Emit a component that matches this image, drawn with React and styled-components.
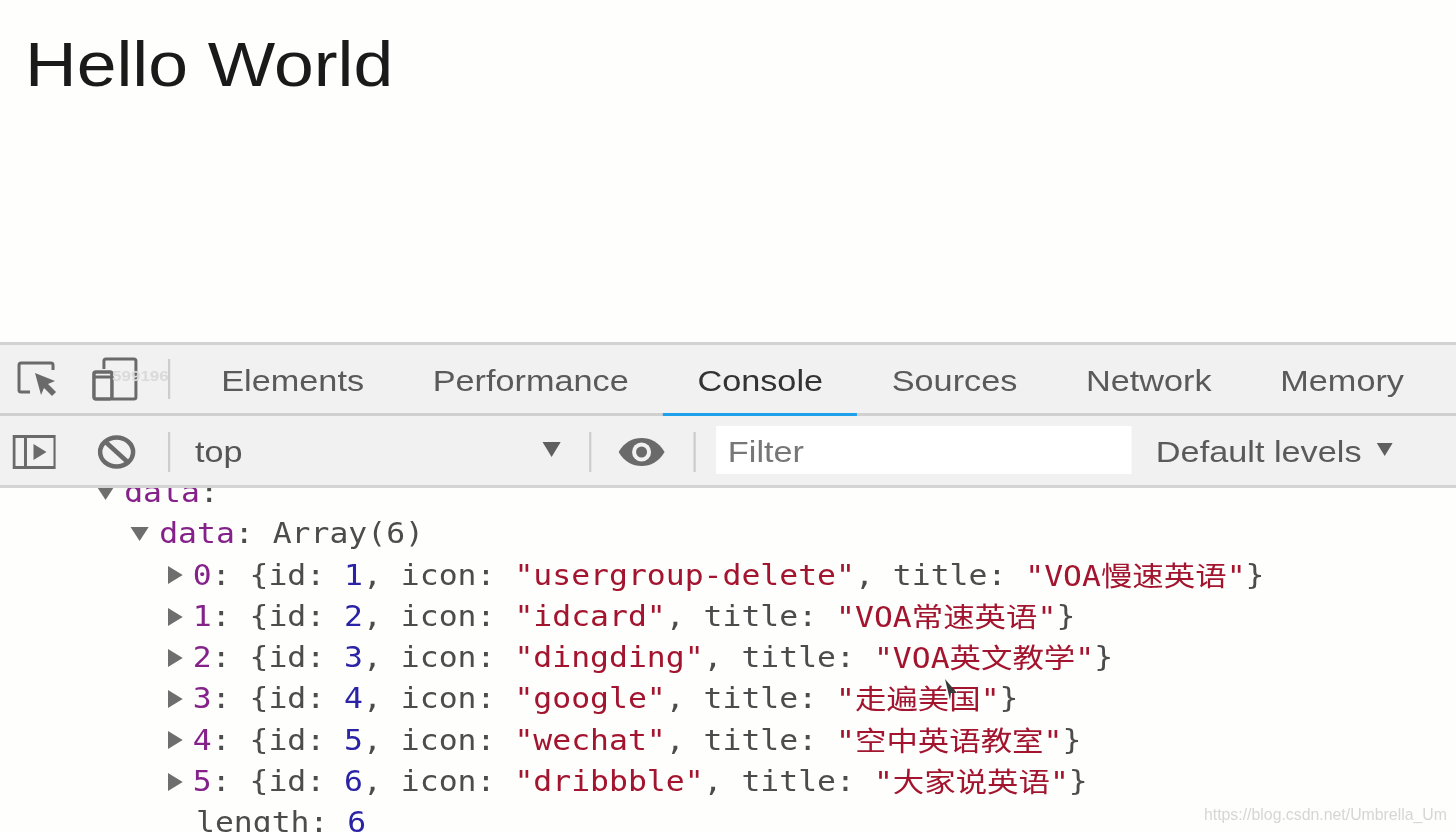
import React from 'react';
import styled, { createGlobalStyle } from 'styled-components';

// the capture is stretched sideways, so the whole devtools page is drawn narrow and scaled up
const STRETCH = 1.135;
const sx = (n) => n / STRETCH;

const GlobalStyle = createGlobalStyle`
  html, body {
    margin: 0;
    padding: 0;
    background: #fff;
  }
`;

const Shell = styled.div`
  position: relative;
  width: 1456px;
  height: 832px;
  overflow: hidden;
  background: #fefefd;
  font-family: "Liberation Sans", Arial, sans-serif;
  filter: blur(0.6px);
`;

const Page = styled.div`
  width: ${sx(1456)}px;
  height: 832px;
  display: flex;
  flex-direction: column;
  transform: scaleX(${STRETCH});
  transform-origin: left top;
`;

const Viewport = styled.div`
  height: 342px;
  flex: none;
  padding: 26px 0 0 ${sx(25)}px;
  box-sizing: border-box;
`;

const Heading = styled.h1`
  margin: 0;
  font-size: 63px;
  line-height: 76px;
  font-weight: 400;
  color: #1a1a1a;
`;

const TabBar = styled.div`
  position: relative;
  flex: none;
  height: 68px;
  display: flex;
  align-items: center;
  background: #f1f1f1;
  border-top: 3px solid #d2d2d2;
  border-bottom: 3px solid #d0d0d0;
`;

const IconSlot = styled.div`
  flex: none;
  width: ${(p) => sx(p.$width)}px;
  margin-left: ${(p) => sx(p.$left || 0)}px;
  display: flex;
  align-items: center;
  justify-content: center;

  svg {
    width: 100%;
  }
`;

const Divider = styled.div`
  flex: none;
  width: ${sx(2)}px;
  height: 40px;
  background: #cdcdcd;
  margin-left: ${(p) => sx(p.$left || 0)}px;
`;

const Tabs = styled.div`
  display: flex;
  height: 100%;
  margin-left: ${sx(17)}px;
`;

const Tab = styled.div`
  position: relative;
  padding: 3px ${sx(34.3)}px 0;
  display: flex;
  align-items: center;
  font-size: 30.2px;
  color: ${(p) => (p.$active ? '#333' : '#5a5a5a')};

  ${(p) =>
    p.$active &&
    `
    &::after {
      content: '';
      position: absolute;
      left: 0;
      right: 0;
      bottom: -3px;
      height: 3px;
      background: #1fa0ea;
    }
  `}
`;

const StrayMark = styled.span`
  position: absolute;
  left: ${sx(112)}px;
  top: 22px;
  font-size: 15px;
  font-weight: 700;
  color: #dadada;
`;

const FilterBar = styled.div`
  flex: none;
  height: 67px;
  padding-top: 2px;
  box-sizing: content-box;
  display: flex;
  align-items: center;
  background: #f1f1f1;
  border-bottom: 3px solid #d4d4d4;
`;

const ContextSelect = styled.div`
  flex: none;
  width: ${sx(394)}px;
  margin-left: ${sx(25)}px;
  padding-right: ${sx(28)}px;
  box-sizing: border-box;
  display: flex;
  align-items: center;
  justify-content: space-between;
  font-size: 30.2px;
  color: #555;
`;

const Caret = styled.span`
  flex: none;
  width: 0;
  height: 0;
  border-left: ${(p) => sx(p.$size)}px solid transparent;
  border-right: ${(p) => sx(p.$size)}px solid transparent;
  border-top: ${(p) => p.$size * 1.5}px solid #5f5f5f;
  margin-top: -4px;
`;

const FilterInput = styled.div`
  flex: none;
  width: ${sx(416)}px;
  height: 48px;
  margin: -3px 0 0 ${sx(20)}px;
  padding: 3px 0 0 ${sx(12)}px;
  box-sizing: border-box;
  display: flex;
  align-items: center;
  background: #fff;
  font-size: 30.2px;
  color: #777;
`;

const Levels = styled.div`
  margin-left: ${sx(24)}px;
  display: flex;
  align-items: center;
  gap: ${sx(15)}px;
  font-size: 30.2px;
  color: #5a5a5a;
`;

const Log = styled.div`
  flex: 1;
  min-height: 0;
  overflow: hidden;
  font-family: "DejaVu Sans Mono", "Liberation Mono", "Noto Sans CJK SC", monospace;
  font-size: 27.7px;
  line-height: 41.3px;
  color: #303030;
`;

const Tree = styled.div`
  margin-top: -16px;
`;

const Row = styled.div`
  display: flex;
  align-items: center;
  height: 41.3px;
  white-space: pre;
  padding-left: ${(p) => sx(p.$indent)}px;
`;

const Arrow = styled.span`
  flex: none;
  width: 0;
  height: 0;
  margin-right: ${sx(10)}px;
  ${(p) =>
    p.$open
      ? `
    border-left: ${sx(10)}px solid transparent;
    border-right: ${sx(10)}px solid transparent;
    border-top: 14px solid #6e6e6e;
  `
      : `
    border-top: 9px solid transparent;
    border-bottom: 9px solid transparent;
    border-left: ${sx(15)}px solid #6e6e6e;
  `}
`;

const Key = styled.span`
  color: #85228a;
`;

const Plain = styled.span`
  color: #4c4c4c;
`;

const Num = styled.span`
  color: #2a23a5;
`;

const Str = styled.span`
  color: #a3152f;
`;

const Cjk = styled.span`
  font-family: "Noto Sans CJK SC", sans-serif;
`;

const Pointer = styled.svg`
  position: absolute;
  left: 943px;
  top: 678px;
`;

const Watermark = styled.span`
  position: absolute;
  right: 9px;
  bottom: 8px;
  font-size: 15.85px;
  color: #d6d6d6;
`;

const items = [
  { id: 1, icon: 'usergroup-delete', latin: 'VOA', cjk: '慢速英语' },
  { id: 2, icon: 'idcard', latin: 'VOA', cjk: '常速英语' },
  { id: 3, icon: 'dingding', latin: 'VOA', cjk: '英文教学' },
  { id: 4, icon: 'google', latin: '', cjk: '走遍美国' },
  { id: 5, icon: 'wechat', latin: '', cjk: '空中英语教室' },
  { id: 6, icon: 'dribbble', latin: '', cjk: '大家说英语' },
];

const tabs = ['Elements', 'Performance', 'Console', 'Sources', 'Network', 'Memory'];

const InspectIcon = () => (
  <svg height="40" viewBox="0 0 40 40" fill="none" preserveAspectRatio="none">
    <path d="M13 33H4a2 2 0 0 1-2-2V6a2 2 0 0 1 2-2h30a2 2 0 0 1 2 2v5" stroke="#6a6a6a" strokeWidth="3" />
    <path d="M18 14l20 8-7 3 8 8-4 4-8-8-3 7z" fill="#6a6a6a" />
  </svg>
);

const DeviceIcon = () => (
  <svg height="44" viewBox="0 0 46 44" fill="none" preserveAspectRatio="none">
    <path d="M12 12V4a2 2 0 0 1 2-2h28a2 2 0 0 1 2 2v36a2 2 0 0 1-2 2H20" stroke="#6a6a6a" strokeWidth="3" />
    <rect x="2" y="15" width="18" height="27" rx="2" stroke="#6a6a6a" strokeWidth="3.5" />
    <path d="M2 20h18" stroke="#6a6a6a" strokeWidth="3" />
  </svg>
);

const SidebarIcon = () => (
  <svg height="34" viewBox="0 0 44 34" fill="none" preserveAspectRatio="none">
    <rect x="1.5" y="1.5" width="41" height="31" stroke="#6a6a6a" strokeWidth="3" />
    <path d="M13 1v32" stroke="#6a6a6a" strokeWidth="3" />
    <path d="M21 9l13 8-13 8z" fill="#6a6a6a" />
  </svg>
);

const BlockIcon = () => (
  <svg height="34" viewBox="0 0 38 34" fill="none" preserveAspectRatio="none">
    <ellipse cx="19" cy="17" rx="16.5" ry="14.5" stroke="#6a6a6a" strokeWidth="4.5" />
    <path d="M8 7l22 20" stroke="#6a6a6a" strokeWidth="4.5" />
  </svg>
);

const EyeIcon = () => (
  <svg height="30" viewBox="0 0 46 30" preserveAspectRatio="none">
    <path d="M0 15C6 5 14 1 23 1s17 4 23 14c-6 10-14 14-23 14S6 25 0 15z" fill="#6a6a6a" />
    <circle cx="23" cy="15" r="9.5" fill="#f1f1f1" />
    <circle cx="23" cy="15" r="5.5" fill="#6a6a6a" />
  </svg>
);

const App = () => (
  <Shell>
    <GlobalStyle />
    <Page>
      <Viewport>
        <Heading>Hello World</Heading>
      </Viewport>

      <TabBar>
        <IconSlot $width={40} $left={17}><InspectIcon /></IconSlot>
        <IconSlot $width={46} $left={35}><DeviceIcon /></IconSlot>
        <StrayMark>599196</StrayMark>
        <Divider $left={30} />
        <Tabs>
          {tabs.map((tab) => (
            <Tab key={tab} $active={tab === 'Console'}>{tab}</Tab>
          ))}
        </Tabs>
      </TabBar>

      <FilterBar>
        <IconSlot $width={44} $left={12}><SidebarIcon /></IconSlot>
        <IconSlot $width={38} $left={42}><BlockIcon /></IconSlot>
        <Divider $left={32} />
        <ContextSelect>
          top
          <Caret $size={10} />
        </ContextSelect>
        <Divider />
        <IconSlot $width={46} $left={28}><EyeIcon /></IconSlot>
        <Divider $left={29} />
        <FilterInput>Filter</FilterInput>
        <Levels>
          Default levels
          <Caret $size={9} />
        </Levels>
      </FilterBar>

      <Log>
        <Tree>
          <Row $indent={96}><Arrow $open /><Key>data</Key><Plain>:</Plain></Row>
          <Row $indent={131}><Arrow $open /><Key>data</Key><Plain>: Array(6)</Plain></Row>
          {items.map((item, i) => (
            <Row key={item.id} $indent={168}>
              <Arrow />
              <Key>{i}</Key>
              <Plain>{': {id: '}</Plain>
              <Num>{item.id}</Num>
              <Plain>{', icon: '}</Plain>
              <Str>"{item.icon}"</Str>
              <Plain>{', title: '}</Plain>
              <Str>"{item.latin}<Cjk>{item.cjk}</Cjk>"</Str>
              <Plain>{'}'}</Plain>
            </Row>
          ))}
          <Row $indent={196}><Plain>length</Plain><Plain>: </Plain><Num>6</Num></Row>
        </Tree>
      </Log>
    </Page>

    <Pointer width="16" height="24" viewBox="0 0 16 24">
      <path d="M2 1l12 14-6 0-1 7z" fill="#3a3a3a" />
    </Pointer>
    <Watermark>https://blog.csdn.net/Umbrella_Um</Watermark>
  </Shell>
);

export default App;
